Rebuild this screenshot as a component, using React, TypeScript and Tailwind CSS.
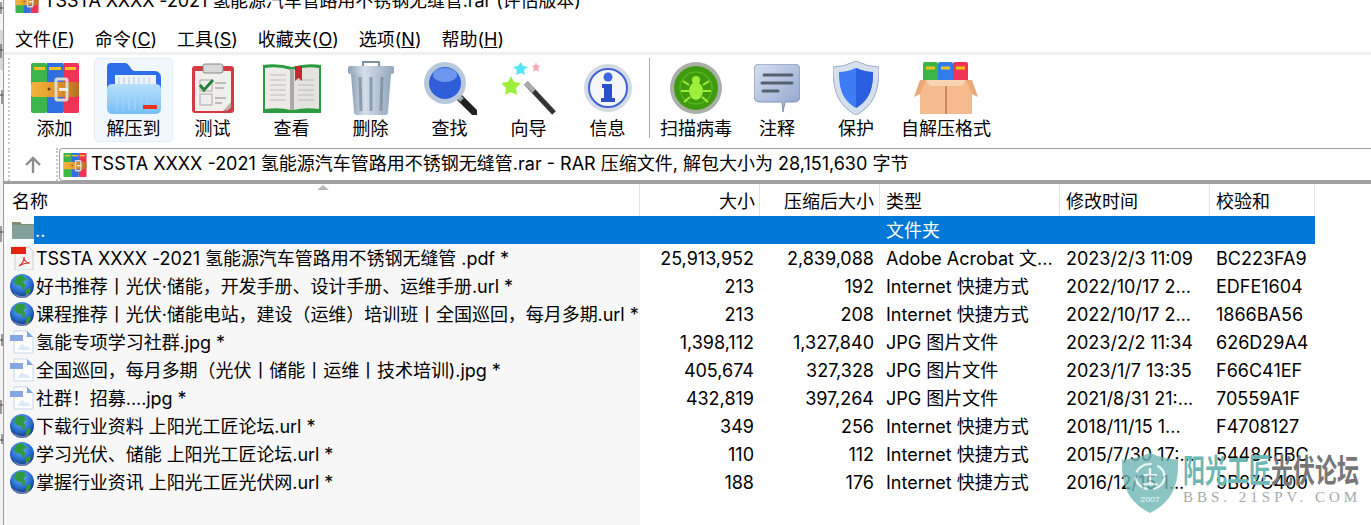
import React from 'react';

const font = { fontFamily: 'Inter, "Noto Sans CJK SC", sans-serif' };

function Rar({ s = 50 }: { s?: number }) {
  return (
    <svg width={s} height={s} viewBox="0 0 48 50">
      <defs>
        <linearGradient id="belt" x1="0" x2="1" y1="0" y2="0">
          <stop offset="0%" stopColor="#f4b53c" />
          <stop offset="50%" stopColor="#e39a2c" />
          <stop offset="100%" stopColor="#b86f24" />
        </linearGradient>
      </defs>
      <rect x="0" y="0" width="16" height="50" rx="2" fill="#3cb54a" />
      <rect x="16" y="0" width="16" height="50" fill="#2f6fe0" />
      <rect x="32" y="0" width="16" height="50" rx="2" fill="#ee3355" />
      <rect x="3" y="4" width="11" height="3" fill="#f0c420" />
      <rect x="18" y="4" width="12" height="3" fill="#f0c420" />
      <rect x="34" y="4" width="11" height="3" fill="#f0c420" />
      <rect x="0" y="19" width="48" height="15" rx="3" fill="url(#belt)" />
      <rect x="25" y="16" width="11" height="21" rx="1.5" fill="none" stroke="#ddd8d0" strokeWidth="3" />
      <circle cx="18" cy="26" r="1.5" fill="#6b3d10" />
      <rect x="28" y="25" width="9" height="3" fill="#eee" />
    </svg>
  );
}

function FolderBig() {
  return (
    <svg width="54" height="52" viewBox="0 0 54 52">
      <defs>
        <linearGradient id="front" x1="0" x2="0" y1="0" y2="1">
          <stop offset="0%" stopColor="#b7e0fd" />
          <stop offset="100%" stopColor="#79bdf7" />
        </linearGradient>
      </defs>
      <path d="M0 5a4 4 0 0 1 4-4h14c4 0 5 6 9 8h21a6 6 0 0 1 6 6v29a6 6 0 0 1-6 6H6a6 6 0 0 1-6-6z" fill="#2d6fe8" />
      <rect x="8" y="13" width="41" height="14" fill="#eef4fb" />
      <path d="M12 15v9M17 15v9M22 15v9M27 15v9M32 15v9M37 15v9M42 15v9" stroke="#b9c8da" />
      <path d="M0 27q0-5 6-5h42q6 0 6 5v19q0 6-6 6H6q-6 0-6-6z" fill="url(#front)" />
      <path d="M10 27v21M16 27v21M22 27v21M28 27v21M34 27v21M40 27v21" stroke="#a7d8fc" />
      <rect x="36" y="43" width="14" height="4" fill="#e8341c" />
    </svg>
  );
}

function Clipboard() {
  return (
    <svg width="42" height="50" viewBox="0 0 42 50">
      <rect x="0" y="3" width="42" height="47" rx="3" fill="#d43a3f" />
      <path d="M3 8h36v34l-8 6H3z" fill="#f1efec" />
      <path d="M31 48l8-9v5q-2 4-8 4z" fill="#b9b3ae" />
      <rect x="11" y="1" width="20" height="9" rx="2" fill="#d9d9d9" stroke="#888" />
      <rect x="8" y="17" width="12" height="11" fill="#eee" stroke="#aaa" />
      <path d="M8 22l4 5 9-10" fill="none" stroke="#26803a" strokeWidth="3" />
      <rect x="8" y="31" width="12" height="11" fill="#eee" stroke="#aaa" />
      <path d="M23 20h11M23 25h9M23 35h11M23 40h7" stroke="#8a8a8a" />
    </svg>
  );
}

function Book() {
  return (
    <svg width="60" height="50" viewBox="0 0 60 50">
      <path d="M1 2q15-2 29 2q14-4 29-2v48H1z" fill="#2c9a3e" />
      <path d="M3 5q14-2 26 2v40q-12-3-26-1z" fill="#ecebe8" />
      <path d="M57 5q-14-2-26 2v40q12-3 26-1z" fill="#e4e3e0" />
      <path d="M8 12h16M8 17h16M8 22h16M8 27h16M8 32h16M8 37h16M36 17h16M36 22h16M36 27h16M36 32h16M36 37h16" stroke="#bbb" />
      <rect x="28" y="6" width="4" height="41" fill="#aaa" />
      <path d="M33 3h7v15l-3.5-3-3.5 3z" fill="#c32a30" />
    </svg>
  );
}

function Trash() {
  return (
    <svg width="46" height="54" viewBox="0 0 46 54">
      <defs>
        <linearGradient id="can" x1="0" x2="1" y1="0" y2="0">
          <stop offset="0%" stopColor="#8ea2b8" />
          <stop offset="35%" stopColor="#d4dfea" />
          <stop offset="100%" stopColor="#93a7bd" />
        </linearGradient>
      </defs>
      <path d="M15 5V1h16v4" fill="none" stroke="#7d8fa3" strokeWidth="2" />
      <rect x="0" y="5" width="46" height="8" rx="2" fill="url(#can)" />
      <path d="M3 13h40l-3 38q0 3-3 3H9q-3 0-3-3z" fill="url(#can)" />
      <path d="M12 16l1 34M23 16v34M34 16l-1 34" stroke="#7f8fa3" strokeWidth="3" opacity="0.8" />
    </svg>
  );
}

function Search() {
  return (
    <svg width="54" height="54" viewBox="0 0 54 54">
      <path d="M36 36l16 16" stroke="#222" strokeWidth="7" strokeLinecap="round" />
      <path d="M33 33l6 6" stroke="#9aa" strokeWidth="5" />
      <circle cx="22" cy="22" r="21" fill="#b8c8dc" />
      <circle cx="22" cy="22" r="16" fill="#2f5fd8" />
      <ellipse cx="22" cy="14" rx="12" ry="7" fill="#6d97ee" />
    </svg>
  );
}

function Wand() {
  return (
    <svg width="54" height="54" viewBox="0 0 54 54">
      <path d="M24 22l28 30" stroke="#333" strokeWidth="5" />
      <path d="M24 22l8 8" stroke="#aaa" strokeWidth="5" />
      <path d="M9 15l3 6 7 1-5 5 1 7-6-3-6 3 1-7-5-5 7-1z" fill="#9cf03c" />
      <path d="M19 1l2 4 5 1-4 3 1 5-4-2-5 2 1-5-4-3 5-1z" fill="#55e6f5" />
      <path d="M34 1l1 3 3 1-2 2 1 4-3-2-3 2 1-4-2-2 3-1z" fill="#f6a8b4" />
    </svg>
  );
}

function Info() {
  return (
    <svg width="50" height="50" viewBox="0 0 50 50">
      <circle cx="25" cy="25" r="24" fill="#d4dae4" />
      <circle cx="25" cy="25" r="19" fill="#f4f6fa" stroke="#3f63d8" strokeWidth="2" />
      <circle cx="25" cy="14" r="4.5" fill="#3b66e0" />
      <path d="M19 21h10v14h3v4H18v-4h3v-10h-2z" fill="#2b50cc" />
    </svg>
  );
}

function Bug() {
  return (
    <svg width="54" height="54" viewBox="0 0 54 54">
      <circle cx="27" cy="27" r="26" fill="#a8b0a8" />
      <circle cx="27" cy="27" r="22" fill="#3f9a10" />
      <circle cx="27" cy="27" r="16" fill="none" stroke="#54b41a" strokeWidth="1.5" />
      <ellipse cx="27" cy="30" rx="7" ry="9" fill="#9df03a" />
      <circle cx="27" cy="19" r="4" fill="#9df03a" />
      <path d="M20 24l-6-4M20 30h-8M21 36l-6 5M34 24l6-4M34 30h8M33 36l6 5" stroke="#9df03a" strokeWidth="2" />
    </svg>
  );
}

function Note() {
  return (
    <svg width="46" height="48" viewBox="0 0 46 48">
      <defs>
        <linearGradient id="bubble" x1="0" x2="1" y1="0" y2="1">
          <stop offset="0%" stopColor="#d6e0f0" />
          <stop offset="100%" stopColor="#8ea4cc" />
        </linearGradient>
      </defs>
      <path d="M6 0h34q6 0 6 6v26q0 6-6 6H31L29 48 28 38H6q-6 0-6-6V6q0-6 6-6z" fill="url(#bubble)" stroke="#7f93b8" />
      <path d="M10 11h28M8 19h30M9 27h15" stroke="#56606f" strokeWidth="3" strokeLinecap="round" />
    </svg>
  );
}

function Shield() {
  return (
    <svg width="46" height="54" viewBox="0 0 46 54">
      <path d="M23 0q12 6 23 6c0 22-4 38-23 48C4 44 0 28 0 6q11 0 23-6z" fill="#d5dfee" stroke="#9aa9c0" />
      <path d="M23 7q9 4 17 4c0 16-3 28-17 36C9 39 6 27 6 11q8 0 17-4z" fill="#3d7cf5" />
      <path d="M23 7q9 4 17 4c0 16-3 28-17 36z" fill="#2a5fe0" />
    </svg>
  );
}

function Box() {
  return (
    <svg width="64" height="52" viewBox="0 0 64 52">
      <rect x="9" y="0" width="15" height="20" rx="2" fill="#3bb54a" />
      <rect x="24" y="0" width="15" height="20" rx="2" fill="#2f7de8" />
      <rect x="39" y="0" width="15" height="20" rx="2" fill="#ee3355" />
      <path d="M12 6h9M27 6h9M42 6h9" stroke="#f0c420" strokeWidth="3" />
      <path d="M6 18h52v34H6z" fill="#f6bb8c" />
      <path d="M6 18h52l-6 0 6 14 6 3-6-17zM6 18l-6 17 6-3 6-14z" fill="#e8a878" />
      <rect x="31" y="24" width="2" height="28" fill="#c98a5c" />
      <path d="M12 18l4 6h32l4-6z" fill="#f9d4b0" />
    </svg>
  );
}

function Globe() {
  return (
    <svg width="24" height="24" viewBox="0 0 24 24" className="shrink-0">
      <defs>
        <radialGradient id="sea" cx="45%" cy="30%" r="70%">
          <stop offset="0%" stopColor="#6fb6f2" />
          <stop offset="60%" stopColor="#2a6fd0" />
          <stop offset="100%" stopColor="#14307c" />
        </radialGradient>
      </defs>
      <circle cx="12" cy="12" r="12" fill="url(#sea)" />
      <path d="M6 3q4-2 8-1l2 4-3 2 2 3-1 6-3-5-4-1-3-3zM16 16l4-2 1 3-5 5z" fill="#2f9a3a" />
      <path d="M3 18q9 8 18 0q-3 6-9 6t-9-6z" fill="#a4a8c4" opacity="0.6" />
    </svg>
  );
}

function Pdf() {
  return (
    <svg width="24" height="24" viewBox="0 0 24 24" className="shrink-0">
      <path d="M5 1h14l4 4v19H5z" fill="#f6f6f6" stroke="#cfcfcf" />
      <rect x="1" y="1" width="15" height="7" fill="#e8200f" />
      <path d="M9 20c3-2 5-6 5-9 0 4 3 6 6 6-4 0-8 1-11 3z" fill="none" stroke="#d9342a" strokeWidth="1.2" />
    </svg>
  );
}

function Jpg() {
  return (
    <svg width="24" height="24" viewBox="0 0 24 24" className="shrink-0">
      <path d="M4 1h13l6 6v16H4z" fill="#fdfdff" stroke="#c6d6ee" />
      <path d="M17 1l6 6h-6z" fill="#7fa4e0" />
      <rect x="0" y="5" width="13" height="6" fill="#86a8e2" />
      <path d="M7 20l5-6 3 3 2-1 4 4z" fill="#dbe8f6" />
    </svg>
  );
}

function SmallFolder() {
  return (
    <svg width="24" height="20" viewBox="0 0 24 20" className="shrink-0">
      <path d="M1 2h8l2 2h12v15H1z" fill="#7f8f6e" />
      <rect x="1" y="5" width="22" height="14" fill="#84a09c" />
    </svg>
  );
}

const tools: { label: string; icon: React.ReactNode; w: string; active?: boolean }[] = [
  { label: '添加', icon: <Rar />, w: 'w-[79px]' },
  { label: '解压到', icon: <FolderBig />, w: 'w-[79px]', active: true },
  { label: '测试', icon: <Clipboard />, w: 'w-[79px]' },
  { label: '查看', icon: <Book />, w: 'w-[79px]' },
  { label: '删除', icon: <Trash />, w: 'w-[79px]' },
  { label: '查找', icon: <Search />, w: 'w-[79px]' },
  { label: '向导', icon: <Wand />, w: 'w-[79px]' },
  { label: '信息', icon: <Info />, w: 'w-[79px]' },
];

const tools2: { label: string; icon: React.ReactNode; w: string }[] = [
  { label: '扫描病毒', icon: <Bug />, w: 'w-[88px]' },
  { label: '注释', icon: <Note />, w: 'w-[74px]' },
  { label: '保护', icon: <Shield />, w: 'w-[84px]' },
  { label: '自解压格式', icon: <Box />, w: 'w-[96px]' },
];

const menus = [
  ['文件(', 'F', ')'],
  ['命令(', 'C', ')'],
  ['工具(', 'S', ')'],
  ['收藏夹(', 'O', ')'],
  ['选项(', 'N', ')'],
  ['帮助(', 'H', ')'],
];

const rows: { icon: React.ReactNode; name: string; size: string; packed: string; type: string; time: string; crc: string }[] = [
  { icon: <Pdf />, name: 'TSSTA XXXX -2021 氢能源汽车管路用不锈钢无缝管 .pdf *', size: '25,913,952', packed: '2,839,088', type: 'Adobe Acrobat 文...', time: '2023/2/3 11:09', crc: 'BC223FA9' },
  { icon: <Globe />, name: '好书推荐丨光伏·储能，开发手册、设计手册、运维手册.url *', size: '213', packed: '192', type: 'Internet 快捷方式', time: '2022/10/17 2...', crc: 'EDFE1604' },
  { icon: <Globe />, name: '课程推荐丨光伏·储能电站，建设（运维）培训班丨全国巡回，每月多期.url *', size: '213', packed: '208', type: 'Internet 快捷方式', time: '2022/10/17 2...', crc: '1866BA56' },
  { icon: <Jpg />, name: '氢能专项学习社群.jpg *', size: '1,398,112', packed: '1,327,840', type: 'JPG 图片文件', time: '2023/2/2 11:34', crc: '626D29A4' },
  { icon: <Jpg />, name: '全国巡回，每月多期（光伏丨储能丨运维丨技术培训).jpg *', size: '405,674', packed: '327,328', type: 'JPG 图片文件', time: '2023/1/7 13:35', crc: 'F66C41EF' },
  { icon: <Jpg />, name: '社群！招募....jpg *', size: '432,819', packed: '397,264', type: 'JPG 图片文件', time: '2021/8/31 21:...', crc: '70559A1F' },
  { icon: <Globe />, name: '下载行业资料 上阳光工匠论坛.url *', size: '349', packed: '256', type: 'Internet 快捷方式', time: '2018/11/15 1...', crc: 'F4708127' },
  { icon: <Globe />, name: '学习光伏、储能 上阳光工匠论坛.url *', size: '110', packed: '112', type: 'Internet 快捷方式', time: '2015/7/30 17:...', crc: '54484EBC' },
  { icon: <Globe />, name: '掌握行业资讯 上阳光工匠光伏网.url *', size: '188', packed: '176', type: 'Internet 快捷方式', time: '2016/12/15 1...', crc: '9B87C400' },
];

function Tool({ label, icon, w, active }: { label: string; icon: React.ReactNode; w: string; active?: boolean }) {
  return (
    <div className={`${w} h-[84px] flex flex-col items-center rounded-sm border ${active ? 'bg-[#f0f7fd] border-[#e1eefa]' : 'border-transparent'}`}>
      <div className="h-[58px] flex items-center justify-center shrink-0">{icon}</div>
      <span className="leading-[24px] whitespace-nowrap">{label}</span>
    </div>
  );
}

export default function App() {
  return (
    <div className="relative w-[1371px] h-[525px] overflow-hidden bg-white text-[18px] text-black flex" style={font}>
      {/* desktop peeking out behind the window */}
      <svg width="3" height="525" viewBox="0 0 3 525" className="shrink-0 bg-[#f4f4f4]">
        <rect x="0" y="30" width="3" height="40" fill="#d8d8d8" />
        <path d="M0 8h3M1 2v12M0 50h3M1 44v14M0 95h3M2 90v14M0 232h3M1 226v16M0 340h3M2 334v12M0 405h3M1 400v14M0 440h3M2 434v10" stroke="#444" />
      </svg>
      <div className="w-px bg-[#9c9c9c] shrink-0" />

      <div className="flex-1 min-w-0 flex flex-col">
        <div className="h-[14px] flex items-end gap-[5px] pl-[11px] overflow-hidden shrink-0">
          <div className="shrink-0 h-[24px] mb-[1px] overflow-hidden"><Rar s={24} /></div>
          <span className="leading-[24px] whitespace-nowrap mb-[1px] tracking-[-0.1px]">TSSTA XXXX -2021 氢能源汽车管路用不锈钢无缝管.rar (评估版本)</span>
        </div>

        <div className="h-[41px] flex items-end gap-[20px] pl-[11px] shrink-0 border-b-[3px] border-[#f0f0f0]">
          {menus.map(([a, k, b]) => (
            <span key={k} className="leading-[24px] whitespace-nowrap">
              {a}
              <span className="underline">{k}</span>
              {b}
            </span>
          ))}
        </div>

        <div className="h-[93px] flex items-start pt-[3px] pl-[4px] shrink-0">
          <div className="w-0 h-[86px] border-l-2 border-dotted border-[#c8c8c8] mr-[5px]" />
          {tools.map(t => (
            <Tool key={t.label} {...t} />
          ))}
          <div className="w-px h-[80px] bg-[#a8a8a8] ml-[2px] mr-[2px]" />
          {tools2.map(t => (
            <Tool key={t.label} {...t} />
          ))}
        </div>

        <div className="h-[36px] flex items-start shrink-0 border-b-[3px] border-[#a0a0a0]">
          <div className="w-[55px] h-[33px] flex items-center justify-between pl-[4px] pr-[1px] shrink-0">
            <div className="w-0 h-full border-l-2 border-dotted border-[#c8c8c8]" />
            <svg width="18" height="18" viewBox="0 0 18 18">
              <path d="M9 17V3M2 9l7-7 7 7" fill="none" stroke="#8c8c8c" strokeWidth="2.4" />
            </svg>
            <div className="w-0 h-full border-l-2 border-dotted border-[#c8c8c8]" />
          </div>
          <div className="flex-1 h-[33px] flex items-center gap-[4px] pl-[3px] border border-[#a0a0a0] border-r-0 rounded-l-sm">
            <Rar s={24} />
            <span className="whitespace-nowrap pb-[2px]">TSSTA XXXX -2021 氢能源汽车管路用不锈钢无缝管.rar - RAR 压缩文件, 解包大小为 28,151,630 字节</span>
          </div>
        </div>

        <div className="flex-1 flex flex-col relative">
          <div className="flex h-[32px] shrink-0 items-center">
            <div className="w-[636px] pl-[8px] pt-[3px] h-full flex items-center border-r border-[#e5e5e5]">名称</div>
            <div className="w-[120px] pr-[4px] pt-[3px] h-full flex items-center justify-end border-r border-[#e5e5e5]">大小</div>
            <div className="w-[120px] pr-[5px] pt-[3px] h-full flex items-center justify-end border-r border-[#e5e5e5]">压缩后大小</div>
            <div className="w-[180px] pl-[6px] pt-[3px] h-full flex items-center border-r border-[#e5e5e5]">类型</div>
            <div className="w-[150px] pl-[6px] pt-[3px] h-full flex items-center border-r border-[#e5e5e5]">修改时间</div>
            <div className="w-[105px] pl-[6px] pt-[3px] h-full flex items-center border-r border-[#e5e5e5]">校验和</div>
          </div>
          <div className="absolute left-[313px] top-[1px] w-0 h-0 border-x-[6px] border-x-transparent border-b-[5px] border-b-[#b8b8b8]" />

          <div className="flex-1 w-[636px] bg-[#f7f7f7] absolute left-0 top-[32px] bottom-0" />

          <div className="relative flex flex-col">
            <div className="flex h-[28px] items-center w-[1311px]">
              <div className="w-[30px] h-full bg-[#fbfbfb] flex items-center pl-[7px] shrink-0"><SmallFolder /></div>
              <div className="flex-1 h-full bg-[#0078d7] text-white flex items-center">
                <span className="w-[852px] pl-[1px]">..</span>
                <span>文件夹</span>
              </div>
            </div>
            {rows.map(r => (
              <div key={r.crc} className="flex h-[28px] items-center w-[1311px]">
                <div className="w-[636px] flex items-center pl-[6px] gap-[2px] whitespace-nowrap">
                  {r.icon}
                  <span className="tracking-[-0.05px]">{r.name}</span>
                </div>
                <div className="w-[120px] pr-[6px] text-right">{r.size}</div>
                <div className="w-[120px] pr-[6px] text-right">{r.packed}</div>
                <div className="w-[180px] pl-[6px] whitespace-nowrap overflow-hidden">{r.type}</div>
                <div className="w-[150px] pl-[6px] whitespace-nowrap overflow-hidden">{r.time}</div>
                <div className="w-[105px] pl-[6px] whitespace-nowrap">{r.crc}</div>
              </div>
            ))}
          </div>
        </div>
      </div>

      {/* forum watermark */}
      <div className="absolute left-[1122px] top-[453px] flex gap-[5px]">
        <svg width="56" height="60" viewBox="0 0 58 71" preserveAspectRatio="none" className="opacity-80">
          <path d="M29 0q14 7 29 8c1 30-6 50-29 63C6 58-1 38 0 8q15-1 29-8z" fill="#6db7b5" />
          <circle cx="29" cy="28" r="15" fill="none" stroke="#e8f4f4" strokeWidth="2.5" strokeDasharray="20 6" />
          <path d="M22 26h14M29 18v18M21 37h16" stroke="#e8f4f4" strokeWidth="2.5" />
          <text x="29" y="58" textAnchor="middle" fontSize="9" fill="#e8f4f4" fontFamily="Liberation Sans">2007</text>
        </svg>
        <div className="flex flex-col">
          <div className="flex h-[37px] text-[22px] leading-[24px] font-bold whitespace-nowrap origin-top scale-y-[1.45]">
            <span className="text-[#6db7b5]">阳光工匠</span>
            <span className="text-[#777]">光伏论坛</span>
          </div>
          <span className="text-[15px] leading-[14px] tracking-[4px] text-[#a8a8a8] whitespace-nowrap" style={{ fontFamily: '"Liberation Serif", serif' }}>BBS. 21SPV. COM</span>
        </div>
      </div>
    </div>
  );
}
